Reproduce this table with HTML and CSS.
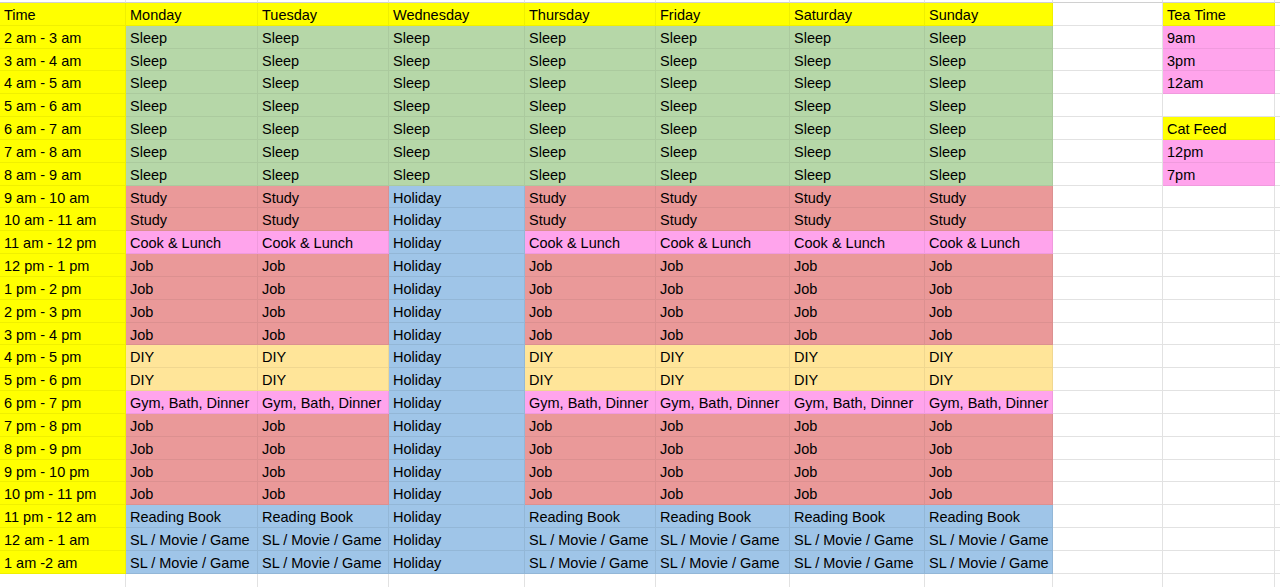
FILE: index.html
```html
<!DOCTYPE html>
<html lang="en">
<head>
<meta charset="utf-8">
<title>Weekly Schedule</title>
<link rel="stylesheet" href="styles.css">
</head>
<body>
<div class="sheet">
  <div class="c top"></div><div class="c top"></div><div class="c top"></div><div class="c top"></div><div class="c top"></div><div class="c top"></div><div class="c top"></div><div class="c top"></div><div class="c top"></div><div class="c top"></div><div class="c top"></div>

  <div class="c y">Time</div><div class="c y">Monday</div><div class="c y">Tuesday</div><div class="c y">Wednesday</div><div class="c y">Thursday</div><div class="c y">Friday</div><div class="c y">Saturday</div><div class="c y">Sunday</div><div class="c"></div><div class="c y">Tea Time</div><div class="c"></div>

  <div class="c y">2 am - 3 am</div><div class="c g">Sleep</div><div class="c g">Sleep</div><div class="c g">Sleep</div><div class="c g">Sleep</div><div class="c g">Sleep</div><div class="c g">Sleep</div><div class="c g">Sleep</div><div class="c"></div><div class="c p">9am</div><div class="c"></div>

  <div class="c y">3 am - 4 am</div><div class="c g">Sleep</div><div class="c g">Sleep</div><div class="c g">Sleep</div><div class="c g">Sleep</div><div class="c g">Sleep</div><div class="c g">Sleep</div><div class="c g">Sleep</div><div class="c"></div><div class="c p">3pm</div><div class="c"></div>

  <div class="c y">4 am - 5 am</div><div class="c g">Sleep</div><div class="c g">Sleep</div><div class="c g">Sleep</div><div class="c g">Sleep</div><div class="c g">Sleep</div><div class="c g">Sleep</div><div class="c g">Sleep</div><div class="c"></div><div class="c p">12am</div><div class="c"></div>

  <div class="c y">5 am - 6 am</div><div class="c g">Sleep</div><div class="c g">Sleep</div><div class="c g">Sleep</div><div class="c g">Sleep</div><div class="c g">Sleep</div><div class="c g">Sleep</div><div class="c g">Sleep</div><div class="c"></div><div class="c"></div><div class="c"></div>

  <div class="c y">6 am - 7 am</div><div class="c g">Sleep</div><div class="c g">Sleep</div><div class="c g">Sleep</div><div class="c g">Sleep</div><div class="c g">Sleep</div><div class="c g">Sleep</div><div class="c g">Sleep</div><div class="c"></div><div class="c y">Cat Feed</div><div class="c"></div>

  <div class="c y">7 am - 8 am</div><div class="c g">Sleep</div><div class="c g">Sleep</div><div class="c g">Sleep</div><div class="c g">Sleep</div><div class="c g">Sleep</div><div class="c g">Sleep</div><div class="c g">Sleep</div><div class="c"></div><div class="c p">12pm</div><div class="c"></div>

  <div class="c y">8 am - 9 am</div><div class="c g">Sleep</div><div class="c g">Sleep</div><div class="c g">Sleep</div><div class="c g">Sleep</div><div class="c g">Sleep</div><div class="c g">Sleep</div><div class="c g">Sleep</div><div class="c"></div><div class="c p">7pm</div><div class="c"></div>

  <div class="c y">9 am - 10 am</div><div class="c r">Study</div><div class="c r">Study</div><div class="c b">Holiday</div><div class="c r">Study</div><div class="c r">Study</div><div class="c r">Study</div><div class="c r">Study</div><div class="c"></div><div class="c"></div><div class="c"></div>

  <div class="c y">10 am - 11 am</div><div class="c r">Study</div><div class="c r">Study</div><div class="c b">Holiday</div><div class="c r">Study</div><div class="c r">Study</div><div class="c r">Study</div><div class="c r">Study</div><div class="c"></div><div class="c"></div><div class="c"></div>

  <div class="c y">11 am - 12 pm</div><div class="c p">Cook &amp; Lunch</div><div class="c p">Cook &amp; Lunch</div><div class="c b">Holiday</div><div class="c p">Cook &amp; Lunch</div><div class="c p">Cook &amp; Lunch</div><div class="c p">Cook &amp; Lunch</div><div class="c p">Cook &amp; Lunch</div><div class="c"></div><div class="c"></div><div class="c"></div>

  <div class="c y">12 pm - 1 pm</div><div class="c r">Job</div><div class="c r">Job</div><div class="c b">Holiday</div><div class="c r">Job</div><div class="c r">Job</div><div class="c r">Job</div><div class="c r">Job</div><div class="c"></div><div class="c"></div><div class="c"></div>

  <div class="c y">1 pm - 2 pm</div><div class="c r">Job</div><div class="c r">Job</div><div class="c b">Holiday</div><div class="c r">Job</div><div class="c r">Job</div><div class="c r">Job</div><div class="c r">Job</div><div class="c"></div><div class="c"></div><div class="c"></div>

  <div class="c y">2 pm - 3 pm</div><div class="c r">Job</div><div class="c r">Job</div><div class="c b">Holiday</div><div class="c r">Job</div><div class="c r">Job</div><div class="c r">Job</div><div class="c r">Job</div><div class="c"></div><div class="c"></div><div class="c"></div>

  <div class="c y">3 pm - 4 pm</div><div class="c r">Job</div><div class="c r">Job</div><div class="c b">Holiday</div><div class="c r">Job</div><div class="c r">Job</div><div class="c r">Job</div><div class="c r">Job</div><div class="c"></div><div class="c"></div><div class="c"></div>

  <div class="c y">4 pm - 5 pm</div><div class="c d">DIY</div><div class="c d">DIY</div><div class="c b">Holiday</div><div class="c d">DIY</div><div class="c d">DIY</div><div class="c d">DIY</div><div class="c d">DIY</div><div class="c"></div><div class="c"></div><div class="c"></div>

  <div class="c y">5 pm - 6 pm</div><div class="c d">DIY</div><div class="c d">DIY</div><div class="c b">Holiday</div><div class="c d">DIY</div><div class="c d">DIY</div><div class="c d">DIY</div><div class="c d">DIY</div><div class="c"></div><div class="c"></div><div class="c"></div>

  <div class="c y">6 pm - 7 pm</div><div class="c p">Gym, Bath, Dinner</div><div class="c p">Gym, Bath, Dinner</div><div class="c b">Holiday</div><div class="c p">Gym, Bath, Dinner</div><div class="c p">Gym, Bath, Dinner</div><div class="c p">Gym, Bath, Dinner</div><div class="c p">Gym, Bath, Dinner</div><div class="c"></div><div class="c"></div><div class="c"></div>

  <div class="c y">7 pm - 8 pm</div><div class="c r">Job</div><div class="c r">Job</div><div class="c b">Holiday</div><div class="c r">Job</div><div class="c r">Job</div><div class="c r">Job</div><div class="c r">Job</div><div class="c"></div><div class="c"></div><div class="c"></div>

  <div class="c y">8 pm - 9 pm</div><div class="c r">Job</div><div class="c r">Job</div><div class="c b">Holiday</div><div class="c r">Job</div><div class="c r">Job</div><div class="c r">Job</div><div class="c r">Job</div><div class="c"></div><div class="c"></div><div class="c"></div>

  <div class="c y">9 pm - 10 pm</div><div class="c r">Job</div><div class="c r">Job</div><div class="c b">Holiday</div><div class="c r">Job</div><div class="c r">Job</div><div class="c r">Job</div><div class="c r">Job</div><div class="c"></div><div class="c"></div><div class="c"></div>

  <div class="c y">10 pm - 11 pm</div><div class="c r">Job</div><div class="c r">Job</div><div class="c b">Holiday</div><div class="c r">Job</div><div class="c r">Job</div><div class="c r">Job</div><div class="c r">Job</div><div class="c"></div><div class="c"></div><div class="c"></div>

  <div class="c y">11 pm - 12 am</div><div class="c b">Reading Book</div><div class="c b">Reading Book</div><div class="c b">Holiday</div><div class="c b">Reading Book</div><div class="c b">Reading Book</div><div class="c b">Reading Book</div><div class="c b">Reading Book</div><div class="c"></div><div class="c"></div><div class="c"></div>

  <div class="c y">12 am - 1 am</div><div class="c b">SL / Movie / Game</div><div class="c b">SL / Movie / Game</div><div class="c b">Holiday</div><div class="c b">SL / Movie / Game</div><div class="c b">SL / Movie / Game</div><div class="c b">SL / Movie / Game</div><div class="c b">SL / Movie / Game</div><div class="c"></div><div class="c"></div><div class="c"></div>

  <div class="c y">1 am -2 am</div><div class="c b">SL / Movie / Game</div><div class="c b">SL / Movie / Game</div><div class="c b">Holiday</div><div class="c b">SL / Movie / Game</div><div class="c b">SL / Movie / Game</div><div class="c b">SL / Movie / Game</div><div class="c b">SL / Movie / Game</div><div class="c"></div><div class="c"></div><div class="c"></div>

  <div class="c"></div><div class="c"></div><div class="c"></div><div class="c"></div><div class="c"></div><div class="c"></div><div class="c"></div><div class="c"></div><div class="c"></div><div class="c"></div><div class="c"></div>
</div>
</body>
</html>
```

FILE: styles.css
```css
html, body {
  margin: 0;
  padding: 0;
  background: #ffffff;
  overflow: hidden;
}

.sheet {
  display: grid;
  grid-template-columns: 126px 132px 131px 136px 131px 134px 135px 128px 110px 112px 1fr;
  grid-template-rows: 3px repeat(25, 22.84px) 30px;
  width: 1280px;
  font-family: "Liberation Sans", Arial, sans-serif;
  font-size: 14.5px;
  color: #000000;
}

.c {
  box-sizing: border-box;
  border-right: 1px solid #e2e2e2;
  border-bottom: 1px solid #e2e2e2;
  padding: 2px 4px 0 4px;
  line-height: 20.8px;
  white-space: nowrap;
  overflow: hidden;
  background: #ffffff;
}

.c.top {
  padding: 0;
  border-bottom-color: #d0d0d0;
}

.y { background: #ffff00; border-color: rgba(0, 0, 0, 0.06); }
.g { background: #b6d7a8; border-color: rgba(0, 0, 0, 0.06); }
.r { background: #ea9999; border-color: rgba(0, 0, 0, 0.06); }
.b { background: #9fc5e8; border-color: rgba(0, 0, 0, 0.07); }
.d { background: #ffe599; border-color: rgba(0, 0, 0, 0.06); }
.p { background: #ffa4ec; border-color: rgba(0, 0, 0, 0.06); }
```
